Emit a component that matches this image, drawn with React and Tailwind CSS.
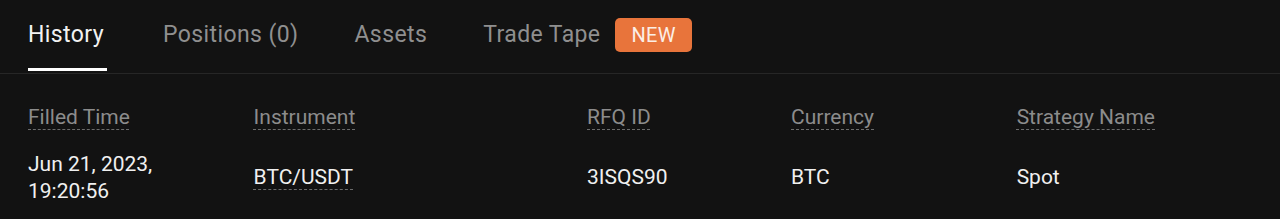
export default function App() {
  const cols = [
    { label: "Filled Time", w: "w-[230px]" },
    { label: "Instrument", w: "w-[340px]" },
    { label: "RFQ ID", w: "w-[208px]" },
    { label: "Currency", w: "w-[230px]" },
    { label: "Strategy Name", w: "w-[240px]" },
  ];
  const dashed = "underline decoration-dashed decoration-[#6b6b6b] decoration-1 underline-offset-[5px]";
  return (
    <div className="w-[1280px] h-[219px] bg-[#121212] overflow-hidden" style={{ fontFamily: "Roboto, 'Noto Sans', sans-serif" }}>
      <div className="flex items-end h-[74px] px-[28px] gap-[56px] border-b border-[#262626]">
        <div className="flex flex-col items-start h-full justify-end">
          <span className="text-[23px] leading-[30px] text-[#f2f2f2] mb-[18px] tracking-[0.4px]">History</span>
          <div className="h-[3px] w-[79px] bg-white mb-[2px]" />
        </div>
        <span className="text-[23px] leading-[30px] text-[#8f8f8f] mb-[23px] tracking-[0.4px]">Positions (0)</span>
        <span className="text-[23px] leading-[30px] text-[#8f8f8f] mb-[23px] tracking-[0.4px]">Assets</span>
        <div className="flex items-start gap-[15px] mb-[21px]">
          <span className="text-[23px] leading-[30px] text-[#8f8f8f] tracking-[0.4px] mt-[2px]">Trade Tape</span>
          <span className="bg-[#e8743b] text-[#fbeee6] text-[20px] leading-[34px] px-[16px] rounded-[5px] tracking-[0.3px]">NEW</span>
        </div>
      </div>
      <div className="px-[28px]">
        <div className="flex h-[84px] items-center pt-[3px]">
          {cols.map((c) => (
            <div key={c.label} className={c.w}>
              <span className={`text-[21px] text-[#8c8c8c] ${dashed}`}>{c.label}</span>
            </div>
          ))}
        </div>
        <div className="flex items-center text-[21px] text-[#f0f0f0] -mt-[7px]">
          <div className="w-[230px] leading-[27px]">
            Jun 21, 2023,
            <br />
            19:20:56
          </div>
          <div className="w-[340px]">
            <span className={dashed}>BTC/USDT</span>
          </div>
          <div className="w-[208px]">3ISQS90</div>
          <div className="w-[230px]">BTC</div>
          <div className="w-[240px]">Spot</div>
        </div>
      </div>
    </div>
  );
}
